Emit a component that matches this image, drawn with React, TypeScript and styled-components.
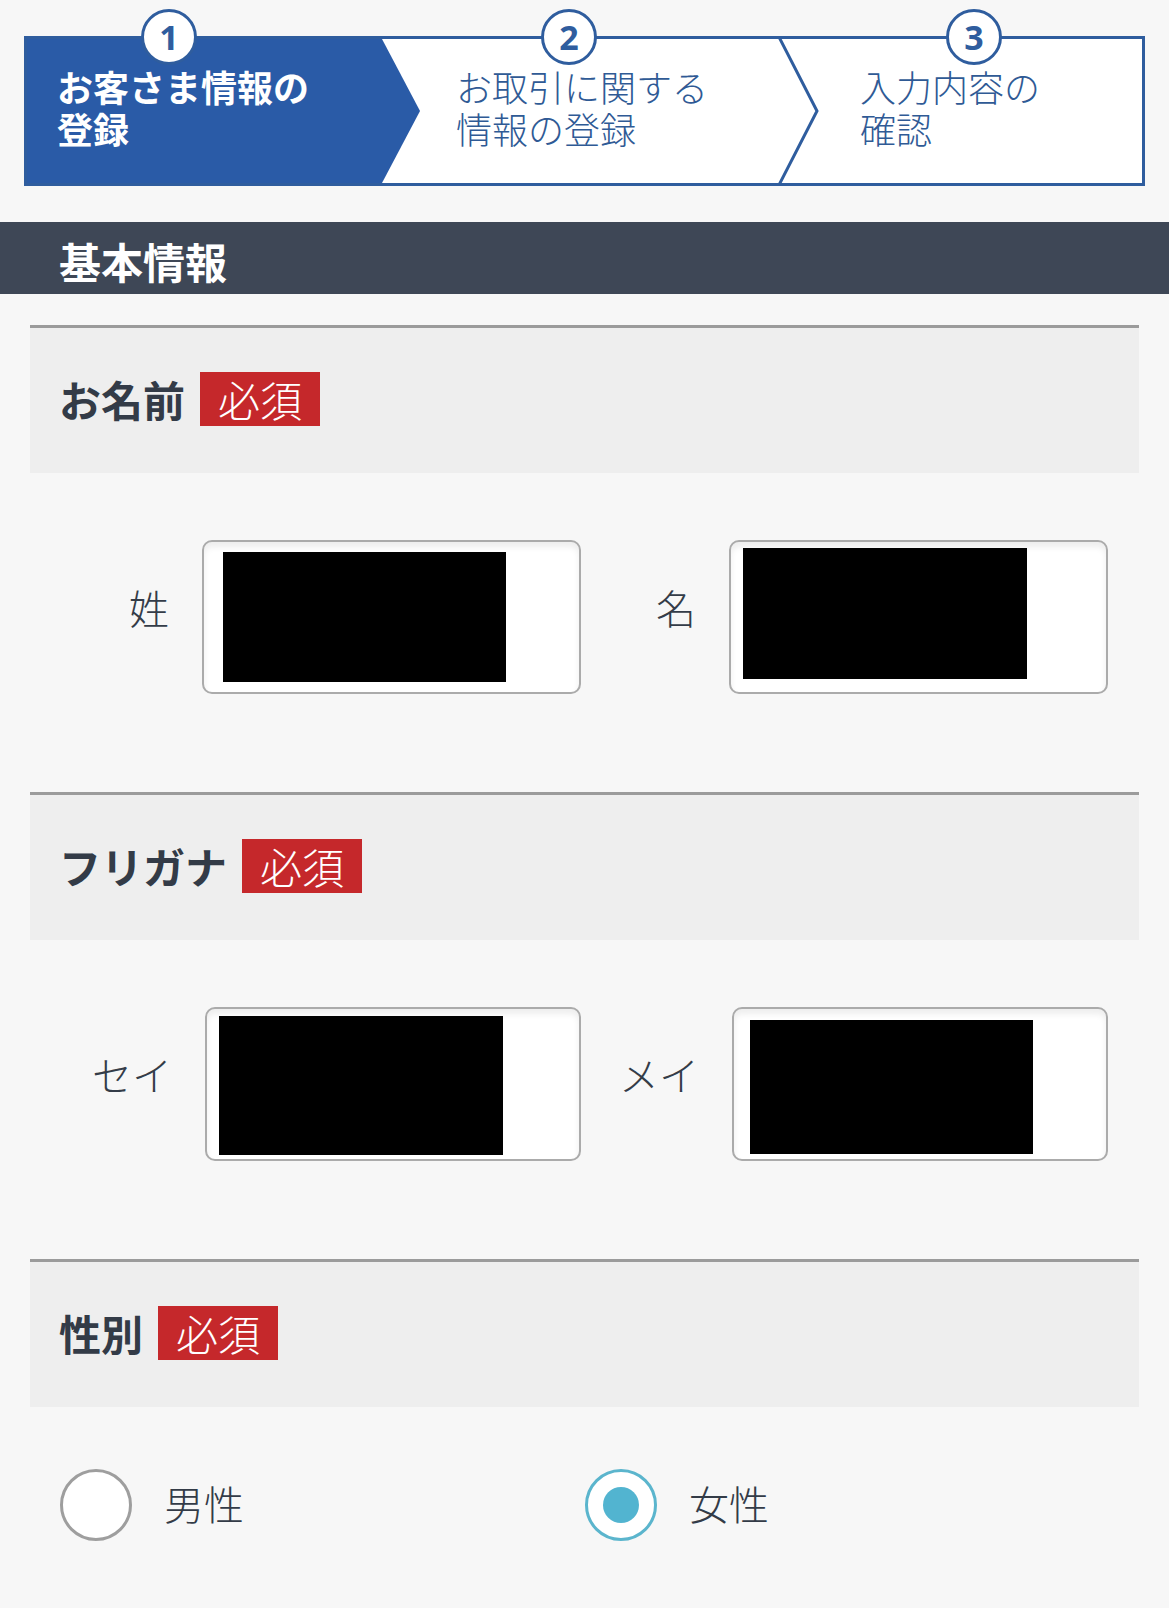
import React from "react";
import styled, { createGlobalStyle } from "styled-components";

const GlobalStyle = createGlobalStyle`
  html, body {
    margin: 0;
    padding: 0;
    background: #f7f7f7;
  }
  body {
    font-family: "Noto Sans CJK JP", "Noto Sans", sans-serif;
    color: #333b47;
  }
  * { box-sizing: border-box; }
`;

const Page = styled.div`
  min-height: 1608px;
  padding-top: 36px;
  background: #f7f7f7;
`;

/* ---------- Stepper ---------- */
const Stepper = styled.ol`
  position: relative;
  list-style: none;
  margin: 0 24px;
  padding: 0;
  height: 150px;
  display: grid;
  grid-template-columns: 374px 397px 1fr;
  border: 3px solid #2f5d9e;
  background: #fff;
`;

const StepperArt = styled.svg`
  position: absolute;
  inset: 0;
  width: 100%;
  height: 100%;
  display: block;
`;

const Step = styled.li<{ $pad: number }>`
  position: relative;
  z-index: 1;
  padding: 26px 0 0 ${(p) => p.$pad}px;
`;

const StepNumber = styled.span<{ $left: number }>`
  position: absolute;
  top: -30px;
  left: ${(p) => p.$left}px;
  width: 56px;
  height: 56px;
  border: 3px solid #2f5d9e;
  border-radius: 50%;
  background: #fff;
  color: #2f5d9e;
  display: flex;
  align-items: center;
  justify-content: center;
  font-family: "Noto Sans", "Roboto", sans-serif;
  font-weight: 700;
  font-size: 34px;
  line-height: 1;
`;

const StepLine = styled.span<{ $active?: boolean }>`
  display: block;
  height: 42px;
  font-size: 36px;
  line-height: 42px;
  font-weight: ${(p) => (p.$active ? 700 : 300)};
  color: ${(p) => (p.$active ? "#ffffff" : "#2f5a95")};
  white-space: nowrap;
  overflow: visible;
`;

/* ---------- Section bar ---------- */
const SectionBar = styled.h2`
  margin: 36px 0 0;
  height: 72px;
  padding: 17px 0 11px 59px;
  background: #3e4756;
  color: #fff;
  font-size: 42px;
  line-height: 44px;
  font-weight: 700;
`;

/* ---------- Form ---------- */
const FormArea = styled.div`
  padding: 31px 30px 0;
`;

const FieldGroup = styled.section``;

const GroupHeader = styled.div`
  height: 148px;
  border-top: 3px solid #9b9b9b;
  background: #eeeeee;
  display: flex;
  align-items: center;
  gap: 15px;
  padding: 0 0 3px 29px;
`;

const GroupTitle = styled.span`
  font-size: 42px;
  font-weight: 700;
  line-height: 1;
  color: #333b47;
`;

const Required = styled.span`
  display: inline-block;
  height: 54px;
  padding: 0 18px;
  background: #c5282b;
  color: #fff;
  font-size: 42px;
  line-height: 54px;
  font-weight: 300;
`;

const GroupBody = styled.div<{ $top: number; $bottom: number }>`
  padding: ${(p) => p.$top}px 0 ${(p) => p.$bottom}px;
`;

const InputRow = styled.div<{ $cols: string }>`
  display: grid;
  grid-template-columns: ${(p) => p.$cols};
  align-items: center;
`;

const FieldLabel = styled.label`
  text-align: right;
  padding: 0 33px 20px 0;
  font-size: 40px;
  line-height: 1;
  font-weight: 300;
  color: #343c48;
  white-space: nowrap;
`;

const InputBox = styled.div`
  height: 154px;
  border: 2px solid #ababab;
  border-radius: 10px;
  background: #fff;
  box-shadow: inset 0 5px 6px rgba(0, 0, 0, 0.07);
  display: flex;
  align-items: flex-start;
`;

const Redaction = styled.div<{ $l: number; $t: number; $w: number; $h: number }>`
  margin: ${(p) => p.$t}px 0 0 ${(p) => p.$l}px;
  width: ${(p) => p.$w}px;
  height: ${(p) => p.$h}px;
  background: #000;
`;

const RadioRow = styled.div`
  display: grid;
  grid-template-columns: 525px 1fr;
  padding-left: 30px;
`;

const RadioItem = styled.label`
  display: flex;
  align-items: center;
  gap: 32px;
`;

const RadioCircle = styled.span<{ $checked?: boolean }>`
  width: 72px;
  height: 72px;
  border-radius: 50%;
  border: 3px solid ${(p) => (p.$checked ? "#5bb5cd" : "#9e9e9e")};
  background: #fff;
  display: flex;
  align-items: center;
  justify-content: center;
`;

const RadioDot = styled.span`
  width: 36px;
  height: 36px;
  border-radius: 50%;
  background: #52b4d0;
`;

const RadioLabel = styled.span`
  font-size: 40px;
  line-height: 1;
  font-weight: 300;
  padding-bottom: 4px;
  color: #333b47;
`;

export default function App() {
  return (
    <>
      <GlobalStyle />
      <Page>
        <Stepper>
          <StepperArt viewBox="0 0 1115 144" preserveAspectRatio="none" aria-hidden>
            <polygon points="0,0 355,0 393,72 355,144 0,144" fill="#2a5ba7" />
            <polyline
              points="752,-2 790,72 752,146"
              fill="none"
              stroke="#2f5d9e"
              strokeWidth="3"
            />
          </StepperArt>
          <Step $pad={30}>
            <StepNumber $left={114}>1</StepNumber>
            <StepLine $active>お客さま情報の</StepLine>
            <StepLine $active>登録</StepLine>
          </Step>
          <Step $pad={55}>
            <StepNumber $left={140}>2</StepNumber>
            <StepLine>お取引に関する</StepLine>
            <StepLine>情報の登録</StepLine>
          </Step>
          <Step $pad={62}>
            <StepNumber $left={148}>3</StepNumber>
            <StepLine>入力内容の</StepLine>
            <StepLine>確認</StepLine>
          </Step>
        </Stepper>

        <SectionBar>基本情報</SectionBar>

        <FormArea>
          <FieldGroup>
            <GroupHeader>
              <GroupTitle>お名前</GroupTitle>
              <Required>必須</Required>
            </GroupHeader>
            <GroupBody $top={67} $bottom={98}>
              <InputRow $cols="172px 379px 148px 379px">
                <FieldLabel>姓</FieldLabel>
                <InputBox>
                  <Redaction $l={19} $t={10} $w={283} $h={130} />
                </InputBox>
                <FieldLabel>名</FieldLabel>
                <InputBox>
                  <Redaction $l={12} $t={6} $w={284} $h={131} />
                </InputBox>
              </InputRow>
            </GroupBody>
          </FieldGroup>

          <FieldGroup>
            <GroupHeader>
              <GroupTitle>フリガナ</GroupTitle>
              <Required>必須</Required>
            </GroupHeader>
            <GroupBody $top={67} $bottom={98}>
              <InputRow $cols="175px 376px 151px 376px">
                <FieldLabel>セイ</FieldLabel>
                <InputBox>
                  <Redaction $l={12} $t={7} $w={284} $h={139} />
                </InputBox>
                <FieldLabel>メイ</FieldLabel>
                <InputBox>
                  <Redaction $l={16} $t={11} $w={283} $h={134} />
                </InputBox>
              </InputRow>
            </GroupBody>
          </FieldGroup>

          <FieldGroup>
            <GroupHeader>
              <GroupTitle>性別</GroupTitle>
              <Required>必須</Required>
            </GroupHeader>
            <GroupBody $top={62} $bottom={60}>
              <RadioRow>
                <RadioItem>
                  <RadioCircle />
                  <RadioLabel>男性</RadioLabel>
                </RadioItem>
                <RadioItem>
                  <RadioCircle $checked>
                    <RadioDot />
                  </RadioCircle>
                  <RadioLabel>女性</RadioLabel>
                </RadioItem>
              </RadioRow>
            </GroupBody>
          </FieldGroup>
        </FormArea>
      </Page>
    </>
  );
}
